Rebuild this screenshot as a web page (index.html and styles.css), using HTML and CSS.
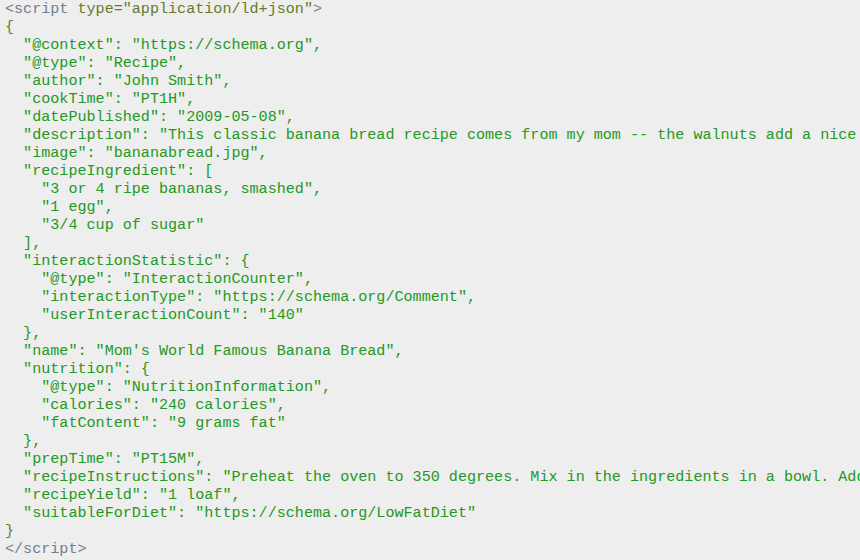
FILE: index.html
```html
<!DOCTYPE html>
<html>
<head>
<meta charset="utf-8">
<link rel="stylesheet" href="styles.css">
</head>
<body>
<pre class="code"><span class="tag">&lt;script</span> <span class="attr">type="application/ld+json"</span><span class="tag">&gt;</span>
<span class="brace">{</span>
<span class="json">  "@context": "https://schema.org",
  "@type": "Recipe",
  "author": "John Smith",
  "cookTime": "PT1H",
  "datePublished": "2009-05-08",
  "description": "This classic banana bread recipe comes from my mom -- the walnuts add a nice texture and flavor to the banana bread.",
  "image": "bananabread.jpg",
  "recipeIngredient": [
    "3 or 4 ripe bananas, smashed",
    "1 egg",
    "3/4 cup of sugar"
  ],
  "interactionStatistic": {
    "@type": "InteractionCounter",
    "interactionType": "https://schema.org/Comment",
    "userInteractionCount": "140"
  },
  "name": "Mom's World Famous Banana Bread",
  "nutrition": {
    "@type": "NutritionInformation",
    "calories": "240 calories",
    "fatContent": "9 grams fat"
  },
  "prepTime": "PT15M",
  "recipeInstructions": "Preheat the oven to 350 degrees. Mix in the ingredients in a bowl. Add the flour last. Pour the mixture into a loaf pan and bake for one hour.",
  "recipeYield": "1 loaf",
  "suitableForDiet": "https://schema.org/LowFatDiet"</span>
<span class="brace">}</span>
<span class="tag">&lt;/script&gt;</span></pre>
</body>
</html>
```
FILE: styles.css
```css
html, body {
  margin: 0;
  padding: 0;
  background: #eeeeee;
  overflow: hidden;
}
.code {
  margin: 0;
  padding: 0 0 0 5px;
  font-family: "Liberation Mono", "Courier New", monospace;
  font-size: 15.1px;
  line-height: 18px;
  white-space: pre;
  color: #229922;
  overflow: hidden;
}
.tag {
  color: #708090;
}
.attr {
  color: #677a2c;
}
.brace {
  color: #677a2c;
}
.json {
  color: #229922;
}
```
